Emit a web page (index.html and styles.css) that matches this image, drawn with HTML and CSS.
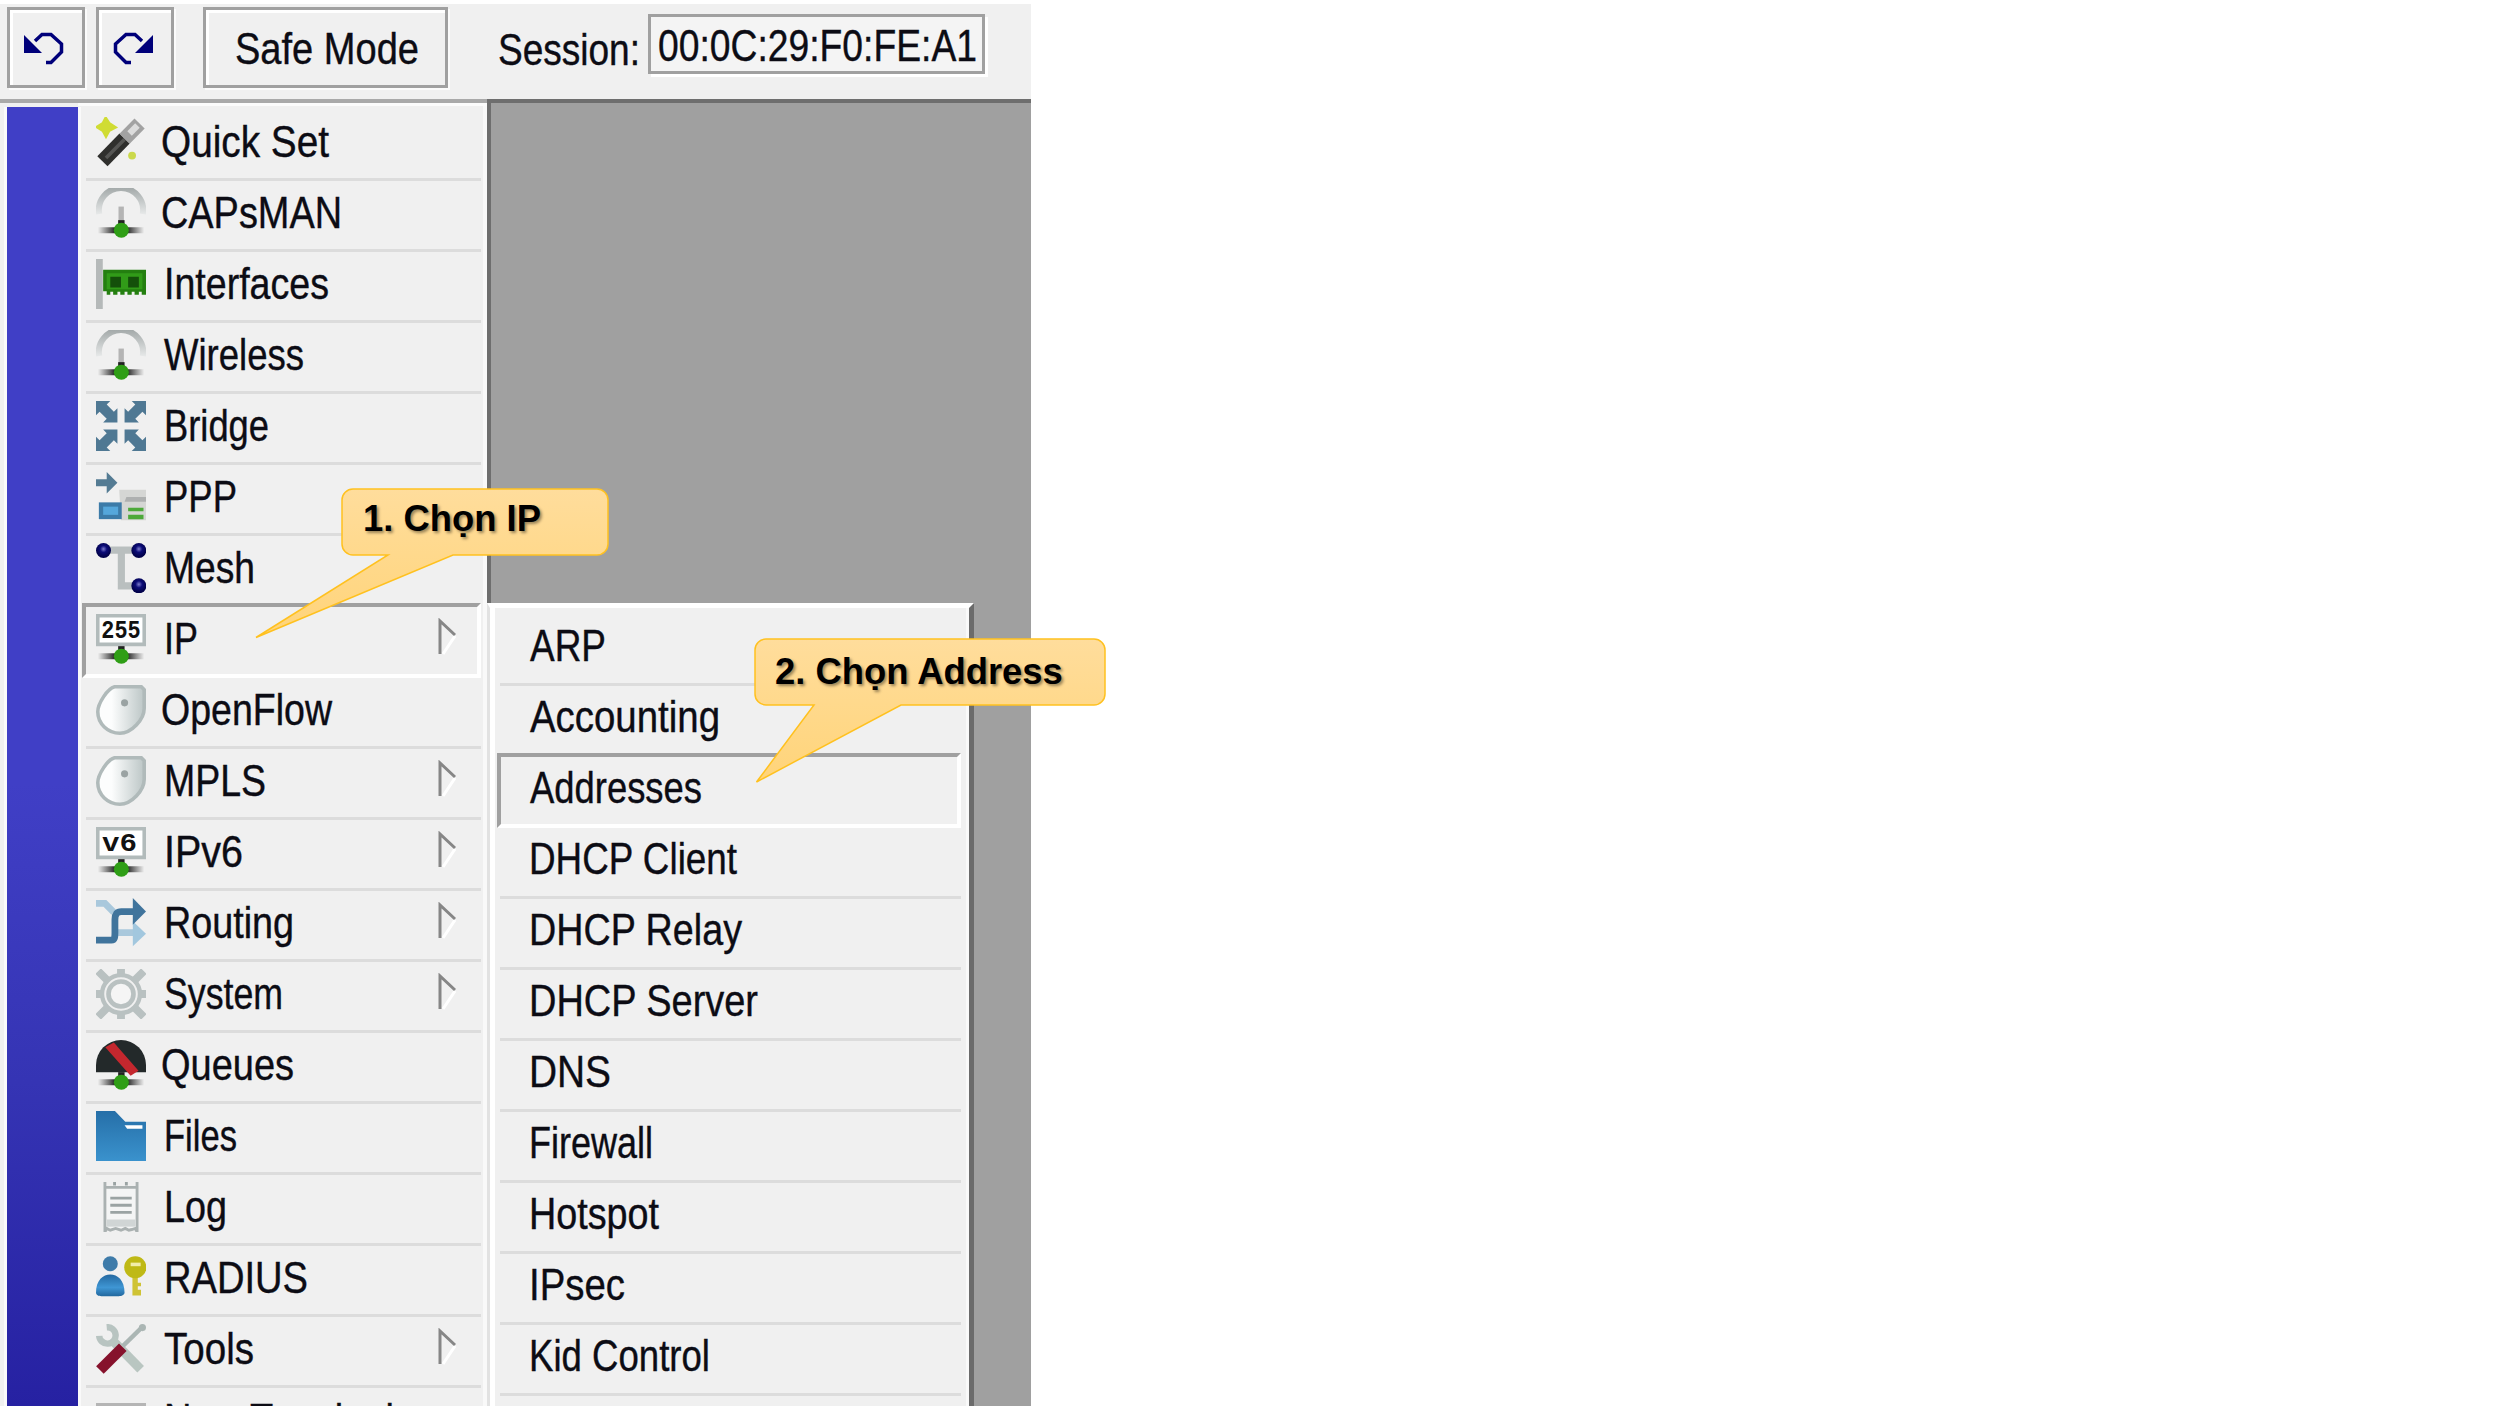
FILE: index.html
```html
<!DOCTYPE html>
<html lang="vi">
<head>
<meta charset="utf-8">
<title>WinBox</title>
<link rel="stylesheet" href="styles.css">
</head>
<body>
<svg class="defs" width="0" height="0">
  <defs>
    <linearGradient id="fade"><stop offset="0" stop-color="#222" stop-opacity="0"/><stop offset=".4" stop-color="#111"/><stop offset=".6" stop-color="#111"/><stop offset="1" stop-color="#222" stop-opacity="0"/></linearGradient>
    <linearGradient id="arc" x2="0" y2="1"><stop offset="0" stop-color="#a4aaaa"/><stop offset="1" stop-color="#e6e8e8"/></linearGradient>
    <linearGradient id="tag"><stop offset=".3" stop-color="#fcfdfd"/><stop offset="1" stop-color="#bcc6c6"/></linearGradient>
    <linearGradient id="folder" x2="0" y2="1"><stop offset="0" stop-color="#266fa8"/><stop offset="1" stop-color="#3a92cd"/></linearGradient>
    <linearGradient id="call" x2="0" y2="1"><stop offset="0" stop-color="#ffdd9c"/><stop offset="1" stop-color="#ffd479"/></linearGradient>
    <radialGradient id="ball" cy=".4"><stop offset="0" stop-color="#7c7ccc"/><stop offset=".45" stop-color="#0c0c78"/><stop offset="1" stop-color="#02024c"/></radialGradient>
    <linearGradient id="body" x2="0" y2="1"><stop offset="0" stop-color="#2468a0"/><stop offset=".6" stop-color="#3f96d4"/><stop offset="1" stop-color="#22689e"/></linearGradient>
  </defs>
  <symbol id="net" viewBox="0 0 14 14"><path d="M.5 11h13v1.7H.5z" fill="url(#fade)"/><path d="M6.2 9h1.8v2H6.2z" fill="#222"/><circle cx="7.1" cy="11.8" r="2.1" fill="#2f9e16"/></symbol>
  <symbol id="wand" viewBox="0 0 14 14"><path d="M2.7 0 3.8 1.7 5.7 2.9 3.8 3.9 2.8 5.7 1.8 3.9 0 2.8 1.8 1.7z" fill="#d0dc34" stroke="#d0dc34" stroke-width=".5"/><circle cx="10.1" cy="10.8" r="1.1" fill="#cbd94c"/><path d="M1.8 12.4 8 6" stroke="#2f2f2d" stroke-width="4"/><path d="M2.8 11.5 8 6.2" stroke="#565654" stroke-width="1"/><path d="M8 6.1 12.2 1.8" stroke="#a2a2a2" stroke-width="4"/><path d="M9.4 4.6 11.6 2.4" stroke="#dcdcdc" stroke-width="1.8"/></symbol>
  <symbol id="radio" viewBox="0 0 14 14"><path d="M.9 7.300A6.200 6.200 0 1 1 13.100 7.300" fill="none" stroke="url(#arc)" stroke-width="1.700"/><path d="M6.300 5.200h1.500v5H6.300z" fill="#b4b4b4"/><use href="#net"/></symbol>
  <symbol id="card" viewBox="0 0 14 14"><path d="M0 0h1.900v14H0z" fill="#b5b9b9"/><path d="M2 3h12v7h-1.200v-.8h-.8v.8h-1.200v-.8H10v.8H8.800v-.8H8v.8H6.800v-.8H6v.8H4.800v-.8H4v.8H3v-1H2z" fill="#247f10"/><path d="M3 4h10v4.500H3z" fill="#319b18"/><path d="M4 5h3v3H4zM9 5h3v3H9z" fill="#14500a"/></symbol>
  <symbol id="bridge" viewBox="0 0 14 14"><g fill="#4f7893"><path id="arr" d="M0 0h4L3 1l2 2 1-1v4H2l1-1-2-2-1 1z"/><use href="#arr" transform="translate(14 0) scale(-1 1)"/><use href="#arr" transform="translate(0 14) scale(1 -1)"/><use href="#arr" transform="translate(8 8)"/></g></symbol>
  <symbol id="ppp" viewBox="0 0 14 14"><path d="M0 2h3V0l3 3-3 3V4H0z" fill="#547b93"/><path d="M6.500 5H14v8.500H7z" fill="#d5d6d4"/><path d="M8.500 7H14v1.300H8z" fill="#aeb0b0"/><path d="M9 10h4.300v1H9zM9 12h4.300v1.200H9z" fill="#4da93a"/><path d="M.8 8.500h6.400v4.700H.8z" fill="#3c7ba8"/><path d="M2 9.700h4.200v2.300H2z" fill="#55a7db"/></symbol>
  <symbol id="mesh" viewBox="0 0 14 14"><path d="M2 2h10M7.100 2v10H12" fill="none" stroke="#b9bfbf" stroke-width="2"/><circle cx="2.100" cy="2.100" r="2.100" fill="url(#ball)"/><circle cx="12" cy="2.100" r="2.100" fill="url(#ball)"/><circle cx="12" cy="12" r="2.100" fill="url(#ball)"/></symbol>
  <symbol id="screen" viewBox="0 0 14 14"><path d="M.5.5h13v8H.5z" fill="#fff" stroke="#b2bbbb"/><use href="#net"/></symbol>
  <symbol id="label" viewBox="0 0 14 14"><path d="M5.200.5h7.500l.8.8v5.200c0 3.200-3.600 7-6.800 7C3.300 13.500.5 10.800.5 7.500.5 5.200 3.200 1 5.200.5z" fill="url(#tag)" stroke="#b0baba"/><circle cx="8" cy="5" r="1" fill="#9aa3a3"/></symbol>
  <symbol id="routing" viewBox="0 0 14 14"><path d="M0 1.500h2.500L5 4M6 9.700h5" fill="none" stroke="#a9c8dc" stroke-width="1.900"/><path d="M10.300 6.500 14 10l-3.700 3.500z" fill="#a2c7de"/><path d="M0 11.800h4.300c1 0 1-1 1-2V6c0-1.500.6-2.200 1.800-2.200H11" fill="none" stroke="#40749c" stroke-width="1.900"/><path d="M10.300 0 14 3.800 10.300 7.500z" fill="#40749c"/></symbol>
  <symbol id="gear" viewBox="0 0 14 14"><g fill="none" stroke="#b9c1c1"><path d="M.6.6l2.700 2.700M13.400.6l-2.700 2.700M.6 13.400l2.700-2.700M13.400 13.400l-2.700-2.700M7 0v1.500M7 14v-1.500M0 7h1.500M14 7h-1.500" stroke-width="2.200"/><circle cx="7" cy="7" r="5.300" stroke-width="1.200"/><circle cx="7" cy="7" r="3.500" stroke-width="1.300" fill="#f5f5f5"/></g></symbol>
  <symbol id="queue" viewBox="0 0 14 14"><path d="M0 9V7a7 7 0 0 1 14 0v2z" fill="#23292a"/><path d="M2.600 2 5 .7 11.900 8.600 9.700 10z" fill="#c4272e"/><use href="#net"/></symbol>
  <symbol id="files" viewBox="0 0 14 14"><path d="M0 0h5.300l2.900 3H14v11H0z" fill="url(#folder)"/><path d="M8 4h5v1H8.700z" fill="#fff"/></symbol>
  <symbol id="log" viewBox="0 0 14 14"><path d="M2.500 0v1.500h9V0v14l-.5-1-1 .3-.8.200-1-.5-1.200.5-1.500-.5-1.500.5-1-.5-.5 1z" fill="#f4f5f5" stroke="#aab1b1" stroke-width=".8"/><path d="M3 10.500h8v2H3z" fill="#d0d5d5"/><path d="M5.200 0v1M8.500 0v1" stroke="#9aa3a3" stroke-width=".8"/><path d="M4 4.500h6M4 6.500h6M4 8.500h6" stroke="#9aa3a3" stroke-width=".8"/></symbol>
  <symbol id="radius" viewBox="0 0 14 14"><circle cx="4" cy="3" r="2.100" fill="#3e7ba9"/><path d="M0 11.200C0 7.500 2 6 4 6s4 1.500 4 5.200c-.3.800-1.200.9-1.800.9H1.800C1 12.100.2 12 0 11.200z" fill="url(#body)"/><path d="M10.200 6h1.500v2.300h.9v1h-.9v1h.9v1.600h-2.400z" fill="#cfc334"/><circle cx="11" cy="4" r="3.100" fill="#bfb916"/><path d="M9.700 2.700h2.800v1H9.700z" fill="#f1edab"/></symbol>
  <symbol id="tools" viewBox="0 0 14 14"><path d="M3 .9A2.300 2.300 0 1 1 .9 3.300" fill="none" stroke="#b8c4c1" stroke-width="1.800"/><path d="M4.500 4.500 12.500 12.700" stroke="#b9c6c1" stroke-width="2.600"/><path d="M7.500 6.200 13 .8" stroke="#abb6b4" stroke-width="1.200"/><circle cx="13" cy="1" r="1" fill="#abb6b4"/><path d="M1.100 12.900 7.500 6.500" stroke="#86122c" stroke-width="3"/></symbol>
  <symbol id="term" viewBox="0 0 14 14"><path d="M0 0h14v12H0z" fill="#b5b5b5"/></symbol>
  <symbol id="more" viewBox="0 0 20 38"><path d="M18 18 6 36" stroke="#fff" stroke-width="3"/><path d="M3 36V3L18 17" fill="none" stroke="#868686" stroke-width="3"/></symbol>
  <symbol id="undo" viewBox="0 0 40 34"><path d="M0 4v18h18z" fill="#00007a"/><path d="M11 10 18 3.500h9L37.500 13v8L27 31.500h-5" fill="none" stroke="#00007a" stroke-width="3.500"/></symbol>
</svg>

<div class="window">
  <div class="toolbar">
    <div class="button button-icon"><svg><use href="#undo"/></svg></div>
    <div class="button button-icon button-redo"><svg><use href="#undo"/></svg></div>
    <div class="button button-safe"><svg class="text"><text x="29" y="54" textLength="184" lengthAdjust="spacingAndGlyphs">Safe Mode</text></svg></div>
    <svg class="text session"><text x="1" y="65" textLength="142" lengthAdjust="spacingAndGlyphs">Session:</text></svg>
    <div class="field"><svg class="text"><text x="7" y="44" textLength="319" lengthAdjust="spacingAndGlyphs">00:0C:29:F0:FE:A1</text></svg></div>
  </div>
  <div class="main">
    <div class="brand"></div>
    <div class="menu">
      <div class="row"><svg class="icon"><use href="#wand"/></svg><svg class="text"><text x="-2" y="47" textLength="168" lengthAdjust="spacingAndGlyphs">Quick Set</text></svg></div>
      <div class="row"><svg class="icon"><use href="#radio"/></svg><svg class="text"><text x="-2" y="47" textLength="181" lengthAdjust="spacingAndGlyphs">CAPsMAN</text></svg></div>
      <div class="row"><svg class="icon"><use href="#card"/></svg><svg class="text"><text x="1" y="47" textLength="165" lengthAdjust="spacingAndGlyphs">Interfaces</text></svg></div>
      <div class="row"><svg class="icon"><use href="#radio"/></svg><svg class="text"><text x="1" y="47" textLength="140" lengthAdjust="spacingAndGlyphs">Wireless</text></svg></div>
      <div class="row"><svg class="icon"><use href="#bridge"/></svg><svg class="text"><text x="1" y="47" textLength="105" lengthAdjust="spacingAndGlyphs">Bridge</text></svg></div>
      <div class="row"><svg class="icon"><use href="#ppp"/></svg><svg class="text"><text x="1" y="47" textLength="73" lengthAdjust="spacingAndGlyphs">PPP</text></svg></div>
      <div class="row"><svg class="icon"><use href="#mesh"/></svg><svg class="text"><text x="1" y="47" textLength="91" lengthAdjust="spacingAndGlyphs">Mesh</text></svg></div>
      <div class="row selected"><svg class="icon" viewBox="0 0 14 14"><use href="#screen"/><text class="lcd" x="1.500" y="6.800" textLength="11" lengthAdjust="spacingAndGlyphs">255</text></svg><svg class="text"><text x="1" y="47" textLength="34" lengthAdjust="spacingAndGlyphs">IP</text></svg><svg class="more"><use href="#more"/></svg></div>
      <div class="row"><svg class="icon"><use href="#label"/></svg><svg class="text"><text x="-2" y="47" textLength="171" lengthAdjust="spacingAndGlyphs">OpenFlow</text></svg></div>
      <div class="row"><svg class="icon"><use href="#label"/></svg><svg class="text"><text x="1" y="47" textLength="102" lengthAdjust="spacingAndGlyphs">MPLS</text></svg><svg class="more"><use href="#more"/></svg></div>
      <div class="row"><svg class="icon" viewBox="0 0 14 14"><use href="#screen"/><text class="lcd" x="1.700" y="6.800" textLength="9.800" lengthAdjust="spacingAndGlyphs">v6</text></svg><svg class="text"><text x="1" y="47" textLength="79" lengthAdjust="spacingAndGlyphs">IPv6</text></svg><svg class="more"><use href="#more"/></svg></div>
      <div class="row"><svg class="icon"><use href="#routing"/></svg><svg class="text"><text x="1" y="47" textLength="130" lengthAdjust="spacingAndGlyphs">Routing</text></svg><svg class="more"><use href="#more"/></svg></div>
      <div class="row"><svg class="icon"><use href="#gear"/></svg><svg class="text"><text x="1" y="47" textLength="119" lengthAdjust="spacingAndGlyphs">System</text></svg><svg class="more"><use href="#more"/></svg></div>
      <div class="row"><svg class="icon"><use href="#queue"/></svg><svg class="text"><text x="-2" y="47" textLength="133" lengthAdjust="spacingAndGlyphs">Queues</text></svg></div>
      <div class="row"><svg class="icon"><use href="#files"/></svg><svg class="text"><text x="1" y="47" textLength="73" lengthAdjust="spacingAndGlyphs">Files</text></svg></div>
      <div class="row"><svg class="icon"><use href="#log"/></svg><svg class="text"><text x="1" y="47" textLength="63" lengthAdjust="spacingAndGlyphs">Log</text></svg></div>
      <div class="row"><svg class="icon"><use href="#radius"/></svg><svg class="text"><text x="1" y="47" textLength="144" lengthAdjust="spacingAndGlyphs">RADIUS</text></svg></div>
      <div class="row"><svg class="icon"><use href="#tools"/></svg><svg class="text"><text x="1" y="47" textLength="90" lengthAdjust="spacingAndGlyphs">Tools</text></svg><svg class="more"><use href="#more"/></svg></div>
      <div class="row"><svg class="icon icon-low"><use href="#term"/></svg><svg class="text"><text x="1" y="47" textLength="230" lengthAdjust="spacingAndGlyphs">New Terminal</text></svg></div>
    </div>
    <div class="desk"></div>
  </div>

  <div class="submenu">
    <div class="row"><svg class="text"><text x="2" y="46" textLength="76" lengthAdjust="spacingAndGlyphs">ARP</text></svg></div>
    <div class="row"><svg class="text"><text x="2" y="46" textLength="190" lengthAdjust="spacingAndGlyphs">Accounting</text></svg></div>
    <div class="row selected"><svg class="text"><text x="2" y="46" textLength="172" lengthAdjust="spacingAndGlyphs">Addresses</text></svg></div>
    <div class="row"><svg class="text"><text x="1" y="46" textLength="208" lengthAdjust="spacingAndGlyphs">DHCP Client</text></svg></div>
    <div class="row"><svg class="text"><text x="1" y="46" textLength="213" lengthAdjust="spacingAndGlyphs">DHCP Relay</text></svg></div>
    <div class="row"><svg class="text"><text x="1" y="46" textLength="229" lengthAdjust="spacingAndGlyphs">DHCP Server</text></svg></div>
    <div class="row"><svg class="text"><text x="1" y="46" textLength="82" lengthAdjust="spacingAndGlyphs">DNS</text></svg></div>
    <div class="row"><svg class="text"><text x="1" y="46" textLength="124" lengthAdjust="spacingAndGlyphs">Firewall</text></svg></div>
    <div class="row"><svg class="text"><text x="1" y="46" textLength="130" lengthAdjust="spacingAndGlyphs">Hotspot</text></svg></div>
    <div class="row"><svg class="text"><text x="1" y="46" textLength="96" lengthAdjust="spacingAndGlyphs">IPsec</text></svg></div>
    <div class="row"><svg class="text"><text x="1" y="46" textLength="181" lengthAdjust="spacingAndGlyphs">Kid Control</text></svg></div>
    <div class="row"></div>
  </div>
</div>

<div class="callout callout-ip">
  <svg width="356" height="152"><path d="M98 1H342a11 11 0 0 1 11 11V56a11 11 0 0 1-11 11H198L1 149.500 133 67H98A11 11 0 0 1 87 56V12A11 11 0 0 1 98 1z"/></svg>
  <span>1. Chọn IP</span>
</div>
<div class="callout callout-address">
  <svg width="356" height="148"><path d="M12 1H340a11 11 0 0 1 11 11V56a11 11 0 0 1-11 11H147L2.500 144 60 67H12A11 11 0 0 1 1 56V12A11 11 0 0 1 12 1z"/></svg>
  <span>2. Chọn Address</span>
</div>
</body>
</html>
```

FILE: styles.css
```css
* { box-sizing: border-box; }
html, body { margin: 0; height: 1406px; overflow: hidden; background: #fff; }
body { position: relative; font-family: "Liberation Sans", Arial, sans-serif; }
.defs { position: absolute; }
svg { display: block; flex: none; }

.window {
  position: relative;
  display: flex;
  flex-direction: column;
  width: 1031px;
  height: 1406px;
  padding-top: 4px;
  overflow: hidden;
}

.text {
  width: 10px;
  height: 68px;
  overflow: visible;
  fill: #0c0c14;
  stroke: #0c0c14;
  stroke-width: .4;
  font-size: 44px;
}
.lcd { font: bold 7.2px "Liberation Mono", monospace; fill: #111; }

.toolbar {
  display: flex;
  align-items: flex-start;
  height: 95px;
  padding: 3px 0 0 7px;
  background: #f0f0f0;
}
.button {
  height: 81px;
  border: 3px solid #a0a0a0;
  box-shadow: inset 3px 3px #fff, 2px 2px #fbfbfb;
}
.button-icon { width: 78px; margin-right: 11px; padding: 21px 0 0 14px; }
.button-icon svg { width: 40px; height: 34px; }
.button-redo svg { transform: scaleX(-1); }
.button-safe { width: 245px; margin-left: 18px; }
.button-safe .text { width: 230px; height: 70px; }
.session { width: 151px; margin: -7px 0 0 49px; }
.field {
  width: 337px;
  height: 60px;
  margin-top: 7px;
  border: 3px solid #a0a0a0;
  background: #f4f4f4;
  box-shadow: 3px 3px #fff;
}
.field .text { height: 50px; }

.main { display: flex; flex: 1; min-height: 0; border-top: 4px solid #a9a9a9; background: #f0f0f0; }
.brand {
  width: 71px;
  margin: 4px 0 0 7px;
  background: linear-gradient(#403fc6 0, #403fc6 52%, #3534b4 75%, #2621a2 100%);
  box-shadow: -3px 0 #fafafa, 3px 0 #fafafa;
}
.menu {
  width: 409px;
  padding: 7px 6px 0 8px;
  box-shadow: inset 0 3px #fbfbfb, inset -4px 0 #f9f9f9;
}
.desk { flex: 1; margin-top: -4px; border: solid #6e6e6e; border-width: 4px 0 0 4px; background: #a0a0a0; }

.row {
  display: flex;
  height: 71px;
  padding-left: 10px;
  border-bottom: 3px solid #dcdcdc;
}
.row .icon { width: 50px; height: 50px; margin: 7px 17px 0 0; }
.row .icon-low { margin-top: 15px; }
.row .more { width: 20px; height: 38px; margin: 11px 24px 0 auto; }
.selected {
  height: 75px;
  margin: -4px 0 0 -4px;
  border: solid;
  border-width: 4px;
  border-color: #a0a0a0 #fff #fff #a0a0a0;
}
.selected .more { margin-right: 20px; }

.submenu {
  position: absolute;
  left: 487px;
  top: 603px;
  width: 487px;
  height: 820px;
  padding: 7px 8px 0 5px;
  background: #f0f0f0;
  border: solid;
  border-width: 5px 5px 0 3px;
  border-color: #fff #6b6b6b #fff #e2e2e2;
  box-shadow: inset 5px 0 #fff, inset -3px 0 #f9f9f9;
}
.submenu .row { margin-left: 5px; padding-left: 28px; }
.submenu .selected { margin-left: 2px; padding-left: 27px; }

.callout { position: absolute; }
.callout path { fill: url(#call); stroke: #ffc11f; stroke-width: 1.5; }
.callout span {
  position: absolute;
  font-size: 36.4px;
  line-height: 42px;
  font-weight: bold;
  white-space: nowrap;
  color: #000;
  text-shadow: 2px 2px 3px rgba(0, 0, 0, .4);
}
.callout-ip { left: 255px; top: 488px; }
.callout-ip span { left: 108px; top: 10px; }
.callout-address { left: 754px; top: 638px; }
.callout-address span { left: 21px; top: 13px; }
```
